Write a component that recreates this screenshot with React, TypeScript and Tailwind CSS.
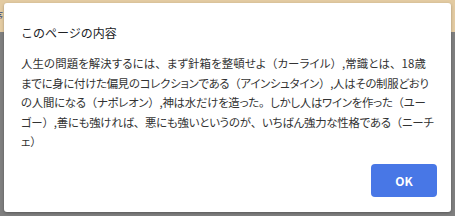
const lines = [
  { text: '人生の問題を解決するには、まず針箱を整頓せよ（カーライル）,常識とは、18歳', track: 'tracking-[0.13px]' },
  { text: 'までに身に付けた偏見のコレクションである（アインシュタイン）,人はその制服どおり', track: 'tracking-[-0.25px]' },
  { text: 'の人間になる（ナポレオン）,神は水だけを造った。しかし人はワインを作った（ユー', track: 'tracking-[-0.23px]' },
  { text: 'ゴー）,善にも強ければ、悪にも強いというのが、いちばん強力な性格である（ニーチ', track: 'tracking-[-0.2px]' },
  { text: 'ェ）', track: '' },
];

// kana are proportional, punctuation keeps its full width
function Line({ text, track }: { text: string; track: string }) {
  const parts = text.split(/([、。（）])/).filter(Boolean);
  return (
    <div className={track}>
      {parts.map((p, i) =>
        /^[、。（）]$/.test(p) ? (
          <span key={i} className="[font-feature-settings:normal]">{p}</span>
        ) : (
          <span key={i}>{p}</span>
        )
      )}
    </div>
  );
}

export default function App() {
  return (
    <div
      className="relative w-[455px] h-[216px] overflow-hidden bg-[#7f7f7f]"
      style={{ fontFamily: '"Noto Sans CJK JP", "Noto Sans", sans-serif' }}
    >
      {/* browser strip behind the dialog */}
      <div className="h-[32px] bg-[#e3cba2]">
        <span className="block pt-[10px] text-[10px] leading-[12px] text-[#3b4a7a] -ml-[7px]">序</span>
      </div>

      {/* alert dialog */}
      <div className="absolute left-[4px] top-[3px] w-[447px] h-[209px] bg-white rounded-[3px] shadow-[0_1px_3px_rgba(0,0,0,0.3)] flex flex-col pl-[17px] pr-[14px] pt-[22px] pb-[15px]">
        <h1 className="text-[12px] leading-[16px] text-[#202124]">このページの内容</h1>
        <div className="mt-[13px] text-[11.4px] leading-[19.5px] text-[#333] whitespace-nowrap [font-feature-settings:'palt']">
          {lines.map((l) => (
            <Line key={l.text} text={l.text} track={l.track} />
          ))}
        </div>
        <div className="mt-auto flex justify-end">
          <button className="w-[66px] h-[33px] rounded-[4px] bg-[#4877e6] text-white text-[12px] font-bold">
            OK
          </button>
        </div>
      </div>
    </div>
  );
}
